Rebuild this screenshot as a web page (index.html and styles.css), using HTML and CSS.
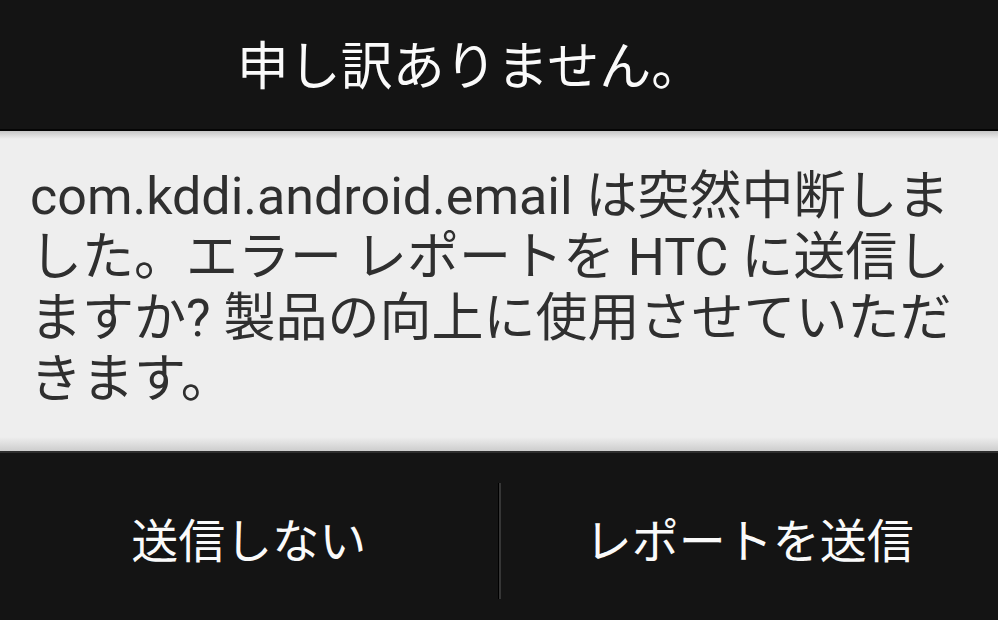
FILE: index.html
```html
<!DOCTYPE html>
<html lang="ja">
<head>
    <meta charset="UTF-8">
    <meta name="viewport" content="width=device-width, initial-scale=1.0">
    <title>申し訳ありません。</title>
    <link rel="stylesheet" href="styles.css">
</head>
<body>
    <div class="dialog">
        <div class="dialog-title">申し訳ありません。</div>

        <div class="dialog-message">
            com.kddi.android.email は突然中断しま<br>
            した。エラー レポートを HTC に送信し<br>
            ますか? 製品の向上に使用させていただ<br>
            きます。
        </div>

        <div class="dialog-buttons">
            <button class="dialog-button">送信しない</button>
            <div class="divider"></div>
            <button class="dialog-button">レポートを送信</button>
        </div>
    </div>
</body>
</html>
```

FILE: styles.css
```css
html, body {
    height: 100%;
}

body {
    margin: 0;
    background-color: #141414;
    font-family: Roboto, "Noto Sans CJK JP", sans-serif;
    overflow: hidden;
}

.dialog {
    width: 998px;
}

.dialog-title {
    height: 129px;
    line-height: 135px;
    padding-right: 58px;
    text-align: center;
    font-size: 52px;
    color: #fafafa;
    background-color: #141414;
    border-bottom: 2px solid #050505;
    overflow: hidden;
}

.dialog-message {
    padding: 35px 20px 41px 30px;
    font-size: 52px;
    line-height: 61px;
    color: #2f2f2f;
    white-space: nowrap;
    background: linear-gradient(to bottom,
        #c6c6c6 0,
        #eeeeee 8px,
        #eeeeee calc(100% - 14px),
        #cdcdcd 100%);
}

.dialog-buttons {
    display: flex;
    align-items: stretch;
    padding-top: 30px;
    border-top: 2px solid #2e2e2e;
    background-color: #141414;
}

.dialog-button {
    flex: 1;
    height: 116px;
    padding: 0 0 8px;
    border: none;
    background: none;
    font-family: inherit;
    font-size: 47px;
    color: #fafafa;
    cursor: pointer;
}

.divider {
    width: 1px;
    background-color: #000;
    border-right: 2px solid #363636;
}
```
